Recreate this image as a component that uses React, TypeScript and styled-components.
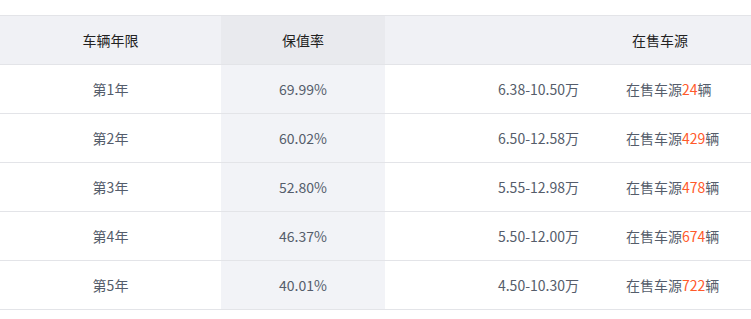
import React from "react";
import styled, { createGlobalStyle } from "styled-components";

const Global = createGlobalStyle`
  html, body { margin: 0; padding: 0; background: #fff; }
  body { font-family: "Microsoft YaHei", "Noto Sans CJK SC", "Noto Sans", sans-serif; }
`;

const Wrap = styled.div`
  padding-top: 15px;
  width: 751px;
`;

const Table = styled.div`
  border-top: 1px solid #e3e4e8;
`;

const Row = styled.div<{ $head?: boolean }>`
  display: grid;
  grid-template-columns: 221px 164px 215px 1fr;
  height: 48px;
  border-bottom: 1px solid #e3e4e8;
  background: ${(p) => (p.$head ? "#f0f1f5" : "#fff")};
  font-size: 14px;
  line-height: 48px;
  color: ${(p) => (p.$head ? "#222" : "#555d6b")};
`;

const Cell = styled.div<{ $align?: "left" | "center" | "right"; $pl?: number; $pr?: number; $bg?: string }>`
  text-align: ${(p) => p.$align || "center"};
  padding-left: ${(p) => p.$pl || 0}px;
  padding-right: ${(p) => p.$pr || 0}px;
  background: ${(p) => p.$bg || "transparent"};
  white-space: nowrap;
`;

const Count = styled.span`
  color: #ff5a2b;
`;

const data = [
  { y: "第1年", r: "69.99%", p: "6.38-10.50万", n: 24 },
  { y: "第2年", r: "60.02%", p: "6.50-12.58万", n: 429 },
  { y: "第3年", r: "52.80%", p: "5.55-12.98万", n: 478 },
  { y: "第4年", r: "46.37%", p: "5.50-12.00万", n: 674 },
  { y: "第5年", r: "40.01%", p: "4.50-10.30万", n: 722 },
];

export default function App() {
  return (
    <Wrap>
      <Global />
      <Table>
        <Row $head>
          <Cell>车辆年限</Cell>
          <Cell $bg="#e9eaee">保值率</Cell>
          <Cell />
          <Cell $align="left" $pl={32}>在售车源</Cell>
        </Row>
        {data.map((d) => (
          <Row key={d.y}>
            <Cell>{d.y}</Cell>
            <Cell $bg="#f2f3f7">{d.r}</Cell>
            <Cell $align="right" $pr={21}>{d.p}</Cell>
            <Cell $align="left" $pl={26}>
              在售车源<Count>{d.n}</Count>辆
            </Cell>
          </Row>
        ))}
      </Table>
    </Wrap>
  );
}
